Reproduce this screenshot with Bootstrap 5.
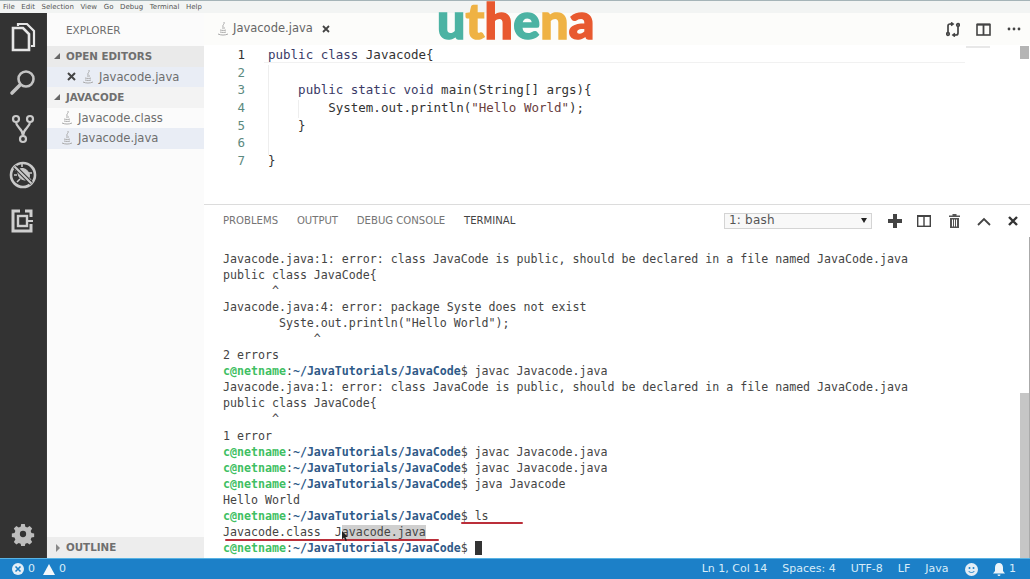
<!DOCTYPE html>
<html lang="en"><head><meta charset="utf-8"><title>Javacode.java</title>
<link href="https://cdn.jsdelivr.net/npm/bootstrap@5.3.0/dist/css/bootstrap.min.css" rel="stylesheet">
<script src="https://cdn.jsdelivr.net/npm/bootstrap@5.3.0/dist/js/bootstrap.bundle.min.js"></script>
<style>
html,body{height:579px;overflow:hidden}
body{font-family:"DejaVu Sans",sans-serif;color:#444;background:#fff;width:1030px}
.app{height:579px}
.menubar{height:13px;background:#f2f4f3;font-size:7px;line-height:12px;color:#555;gap:6.65px;padding-left:3px;border-top:1px solid #a5b4b8;flex:none}
.actbar{width:47px;background:#333;flex:none;padding-top:9px;border-right:1px solid #3a3a3a}
.actbtn{height:46px;color:#ddd}
.actbar svg{display:block}
.side{width:157px;background:#fbfbfb;flex:none}
.sidehead{height:33px;padding-left:19px;line-height:34px;font-size:10.4px;color:#6f6f6f}
.sect{height:20.5px;line-height:21px;background:#eaeaea;font-weight:700;font-size:10.3px;color:#6f6f6f;padding-left:19px;position:relative;flex:none}
.sect.plain{background:#f3f3f3}
.sect:before{content:"";position:absolute;left:7px;top:7px;border:3px solid transparent;border-right-color:#666;border-bottom-color:#666}
.sect.shut:before{left:9px;top:7px;border:4px solid transparent;border-left:4px solid #888;border-right:0}
.fileitem{height:20.5px;line-height:20.5px;color:#6e6e6e;font-size:11.6px;white-space:nowrap;flex:none}
.fileitem.sel{background:#e9edf5}
.main{min-width:0;background:#fff}
.tabs{height:32px;background:#fcfcfa;flex:none;font-size:11.5px;color:#666;padding-left:13px}
.editor{height:159px;flex:none;font-family:"DejaVu Sans Mono",monospace;font-size:12.5px;line-height:17.67px;color:#333;padding-top:1px}
.gutter{width:41px;text-align:right;color:#5c8a80;flex:none}
.gutter b{font-weight:400;color:#333;display:block}
.gutter i{font-style:normal;display:block}
.codearea{margin-left:23px}
.codeln{height:17.67px;white-space:pre}
.kw{color:#3a3a66}.str{color:#6a4040}
.panelhead{height:33px;border-top:1px solid #dcdcdc;flex:none;font-size:10.1px;color:#757575;padding:0 2px 0 19px}
.ptab{margin-right:18.800px;line-height:32px;white-space:nowrap}
.ptab.on{color:#444}
.bashsel{width:148px;height:16px;border:1px solid #d4d4d4;background:#f8f8f8;font-size:12px;line-height:13px;padding-left:4px;color:#555;margin-left:auto;position:relative;letter-spacing:.2px}
.bashsel:after{content:"";position:absolute;right:4px;top:4px;border:3.500px solid transparent;border-top:5px solid #222;border-bottom:0}
.picons{margin-left:8px}
.picons span{width:29.600px;display:flex;justify-content:center;align-items:center}
.term{flex:1;font-family:"DejaVu Sans Mono",monospace;font-size:11.62px;line-height:16.06px;color:#444;padding:14px 0 0 19px;position:relative;overflow:hidden;border-right:1px solid #aaa}
.tl{height:16.06px;white-space:pre}
.pg{color:#3fbf63;font-weight:700}.pb{color:#2f5a88;font-weight:700}
.hl{background:#cfcfcf}
.cur{display:inline-block;width:7px;height:14px;background:#333;vertical-align:-3px}
.rline{position:absolute;height:2px;background:#bb2f3a;border-radius:1px}
.tscroll{position:absolute;right:0;top:156px;width:9px;bottom:0;background:#c6c6c6}
.status{height:21px;background:#1c80c8;color:#d8ecf8;flex:none;font-size:11px;border-top:1px solid #58b3e4;padding:0 14px 0 12px}
.status .rgt{gap:15px}
.smile{margin-left:1.500px}
.mini{position:absolute;left:966px;top:46px;width:24px;height:2px;background:#e8e8e8}
.minis{position:absolute;right:1px;top:46px;width:9px;height:13px;background:#b4b4b4}
.guide{position:absolute;width:1px;background:#eee}
.brand{position:absolute;left:437px;top:0;font-family:Lato,sans-serif;font-weight:900;font-size:50px;line-height:40px;letter-spacing:.2px;-webkit-text-stroke:1.500px currentColor}
.b1{color:#4cb3a3}.b2{color:#efb244}.b3{color:#e8592f}
.curline{position:absolute;left:264px;right:65px;top:62px;height:1px;background:#f1f1f1}
.ptr{position:absolute;left:342px;top:531px}
</style></head><body>
<div class="app d-flex flex-column position-relative">
 <div class="menubar d-flex"><span>File</span><span>Edit</span><span>Selection</span><span>View</span><span>Go</span><span>Debug</span><span>Terminal</span><span>Help</span></div>
 <div class="d-flex flex-grow-1" style="min-height:0">
  <div class="actbar d-flex flex-column">
   <div class="actbtn d-flex justify-content-center"><svg width="26" height="30" viewBox="0 0 26 30" fill="none" stroke="#e6e6e6" stroke-width="2.200"><path d="M8 4V2h9l7 7v15h-3"/><path d="M3 6h10l6 6v16H3z" stroke-width="2.600"/></svg></div>
   <div class="actbtn d-flex justify-content-center"><svg width="30" height="30" viewBox="0 0 30 30" fill="none" stroke="#c4c4c4"><circle cx="18" cy="11" r="7.500" stroke-width="2.600"/><path d="M12 17L4 25" stroke-width="3.600" stroke-linecap="round"/></svg></div>
   <div class="actbtn d-flex justify-content-center"><svg width="24" height="30" viewBox="0 0 24 30" fill="none" stroke="#c9c9c9" stroke-width="2.200"><circle cx="5" cy="5" r="3"/><circle cx="19" cy="5" r="3"/><circle cx="12" cy="25" r="3"/><path d="M5 8c0 6 7 6 7 14M19 8c0 6-7 6-7 14"/></svg></div>
   <div class="actbtn d-flex justify-content-center"><svg width="28" height="30" viewBox="0 0 28 30" fill="none" stroke="#c9c9c9"><circle cx="14" cy="15" r="12" stroke-width="2.600"/><ellipse cx="15" cy="15" rx="5" ry="6.500" fill="#c9c9c9" transform="rotate(-45 14 15)"/><path d="M9 9l-3 1M13 7l0-3M20 13l3 0M19 18l3 2M11 19l-3 3M8 15l-3 0" stroke-width="1.600"/><path d="M5.500 6.500l17 17" stroke="#333" stroke-width="4"/><path d="M5.500 6.500l17 17" stroke-width="2.200"/></svg></div>
   <div class="actbtn d-flex justify-content-center"><svg width="24" height="30" viewBox="0 0 24 30" fill="none" stroke="#cfcfcf"><path d="M9 5H2v20h18v-7" stroke-width="3"/><path d="M14 5h6v6" stroke-width="3"/><rect x="7" y="10" width="9" height="10" stroke-width="2.400"/><path d="M16 15h6" stroke-width="2"/></svg></div>
   <div class="mt-auto d-flex justify-content-center" style="padding-bottom:12px"><svg width="24" height="24" viewBox="0 0 24 24" fill="#bdbdbd"><path fill-rule="evenodd" d="M10 1h4l.6 3 2.200.9 2.600-1.700 2.800 2.800-1.700 2.600.9 2.200 3 .6v4l-3 .6-.9 2.200 1.700 2.600-2.800 2.800-2.600-1.700-2.200.9-.6 3h-4l-.6-3-2.200-.9-2.600 1.700-2.800-2.800 1.700-2.600-.9-2.200-3-.6v-4l3-.6.9-2.200-1.700-2.600 2.800-2.800 2.600 1.700 2.200-.9zM12 8.500a3.500 3.500 0 1 0 0 7 3.500 3.500 0 0 0 0-7z" transform="translate(1.200 1.200) scale(.9)"/></svg></div>
  </div>
  <div class="side d-flex flex-column">
   <div class="sidehead">EXPLORER</div>
   <div class="sect">OPEN EDITORS</div>
   <div class="fileitem sel d-flex align-items-center" style="padding-left:20px"><svg width="9" height="9" viewBox="0 0 9 9" stroke="#444" stroke-width="2" style="margin-right:6px"><path d="M1 1l7 7M8 1l-7 7"/></svg><svg width="12" height="14" viewBox="0 0 12 14" fill="none" stroke="#aaa" style="margin-right:5px"><use href="#javaic"/></svg>Javacode.java</div>
   <div class="sect plain">JAVACODE</div>
   <div class="fileitem d-flex align-items-center" style="padding-left:14px"><svg width="12" height="14" viewBox="0 0 12 14" fill="none" stroke="#aaa" style="margin-right:5px"><use href="#javaic"/></svg>Javacode.class</div>
   <div class="fileitem sel d-flex align-items-center" style="padding-left:14px"><svg width="12" height="14" viewBox="0 0 12 14" fill="none" stroke="#aaa" style="margin-right:5px"><use href="#javaic"/></svg>Javacode.java</div>
   <div class="sect shut mt-auto" style="background:#ededed;height:21px;line-height:21px">OUTLINE</div>
  </div>
  <div class="main flex-grow-1 d-flex flex-column">
   <div class="tabs d-flex align-items-center"><svg width="12" height="14" viewBox="0 0 12 14" fill="none" stroke="#aaa" style="margin-right:4px"><use href="#javaic"/></svg>Javacode.java<svg width="8" height="8" viewBox="0 0 8 8" stroke="#444" stroke-width="1.800" style="margin-left:9px"><path d="M1 1l6 6M7 1L1 7"/></svg>
    <span class="ms-auto d-flex align-items-center" style="padding-right:9px;gap:16px"><svg width="14" height="15" viewBox="0 0 14 15" fill="none" stroke="#444" stroke-width="1.700"><path d="M7 2H4C2.500 2 2 3 2 4v6M5 0.500L7 2 5 3.500M7 13h3c1.500 0 2-1 2-2V5M9 11.500L7 13l2 1.500"/><circle cx="2" cy="12" r="1.300"/><circle cx="12" cy="3" r="1.300"/></svg><svg width="15" height="13" viewBox="0 0 15 13" fill="none" stroke="#444" stroke-width="1.600"><rect x="1" y="1.500" width="13" height="10.500"/><path d="M7.500 1.500V12M1 1.500h13" stroke-width="1.800"/></svg><svg width="14" height="4" viewBox="0 0 14 4" fill="#444"><circle cx="2" cy="2" r="1.400"/><circle cx="7" cy="2" r="1.400"/><circle cx="12" cy="2" r="1.400"/></svg></span></div>
   <div class="editor d-flex">
    <div class="gutter"><b>1</b><i>2</i><i>3</i><i>4</i><i>5</i><i>6</i><i>7</i></div>
    <div class="codearea flex-grow-1">
     <div class="codeln"><span class="kw">public class</span> Javacode{</div>
     <div class="codeln"> </div>
     <div class="codeln">    <span class="kw">public static void</span> main(String[] args){</div>
     <div class="codeln">        System.out.println(<span class="str">"Hello World"</span>);</div>
     <div class="codeln">    }</div>
     <div class="codeln"> </div>
     <div class="codeln">}</div>
    </div>
   </div>
   <div class="panelhead d-flex align-items-center">
    <span class="ptab">PROBLEMS</span><span class="ptab">OUTPUT</span><span class="ptab">DEBUG CONSOLE</span><span class="ptab on">TERMINAL</span>
    <div class="bashsel">1: bash</div>
    <div class="picons d-flex">
     <span><svg width="14" height="14" viewBox="0 0 14 14" fill="#444"><path d="M5 0h4v5h5v4H9v5H5V9H0V5h5z"/></svg></span>
     <span><svg width="14" height="12" viewBox="0 0 14 12" fill="none" stroke="#444" stroke-width="1.400"><rect x=".7" y=".7" width="12.600" height="10.600"/><path d="M7 .7v10.600M.7 1.200h12.600"/></svg></span>
     <span><svg width="11" height="14" viewBox="0 0 11 14" fill="#555"><path d="M3.500 0h4v1.500H11V3H0V1.500h3.500zM1 4h9v10H1zM3 5.500v7h1v-7zm2 0v7h1v-7zm2 0v7h1v-7z" fill-rule="evenodd"/></svg></span>
     <span><svg width="14" height="9" viewBox="0 0 14 9" fill="none" stroke="#444" stroke-width="1.800"><path d="M1 8l6-6 6 6"/></svg></span>
     <span><svg width="10" height="10" viewBox="0 0 10 10" stroke="#333" stroke-width="2.400"><path d="M1 1l8 8M9 1L1 9"/></svg></span>
    </div>
   </div>
   <div class="term">
    <div class="tl">Javacode.java:1: error: class JavaCode is public, should be declared in a file named JavaCode.java</div>
    <div class="tl">public class JavaCode{</div>
    <div class="tl">       ^</div>
    <div class="tl">Javacode.java:4: error: package Syste does not exist</div>
    <div class="tl">        Syste.out.println("Hello World");</div>
    <div class="tl">             ^</div>
    <div class="tl">2 errors</div>
    <div class="tl"><span class="pg">c@netname</span>:<span class="pb">~/JavaTutorials/JavaCode</span>$ javac Javacode.java</div>
    <div class="tl">Javacode.java:1: error: class JavaCode is public, should be declared in a file named JavaCode.java</div>
    <div class="tl">public class JavaCode{</div>
    <div class="tl">       ^</div>
    <div class="tl">1 error</div>
    <div class="tl"><span class="pg">c@netname</span>:<span class="pb">~/JavaTutorials/JavaCode</span>$ javac Javacode.java</div>
    <div class="tl"><span class="pg">c@netname</span>:<span class="pb">~/JavaTutorials/JavaCode</span>$ javac Javacode.java</div>
    <div class="tl"><span class="pg">c@netname</span>:<span class="pb">~/JavaTutorials/JavaCode</span>$ java Javacode</div>
    <div class="tl">Hello World</div>
    <div class="tl"><span class="pg">c@netname</span>:<span class="pb">~/JavaTutorials/JavaCode</span>$ ls</div>
    <div class="tl">Javacode.class  J<span class="hl">avacode.java</span></div>
    <div class="tl"><span class="pg">c@netname</span>:<span class="pb">~/JavaTutorials/JavaCode</span>$ <span class="cur"></span></div>
    <div class="tscroll"></div>
    <div class="rline" style="left:257px;top:285px;width:62px"></div>
    <div class="rline" style="left:21px;top:302px;width:214px"></div>
   </div>
  </div>
 </div>
 <div class="status d-flex align-items-center justify-content-between">
  <div class="d-flex align-items-center gap-1"><svg width="12" height="12" viewBox="0 0 12 12"><circle cx="6" cy="6" r="6" fill="#e4eef6"/><path d="M3.500 3.500l5 5M8.500 3.500l-5 5" stroke="#1c80c8" stroke-width="1.600"/></svg><span>0</span><svg width="12" height="11" viewBox="0 0 12 11" fill="#f4f8fb" class="ms-1"><path d="M6 0l6 11H0z"/></svg><span>0</span></div>
  <div class="rgt d-flex align-items-center"><span>Ln 1, Col 14</span><span>Spaces: 4</span><span>UTF-8</span><span>LF</span><span>Java</span><svg width="13" height="13" viewBox="0 0 13 13" class="smile"><circle cx="6.500" cy="6.500" r="6.500" fill="#e4eef6"/><circle cx="4.500" cy="5" r="1" fill="#1c80c8"/><circle cx="8.500" cy="5" r="1" fill="#1c80c8"/><path d="M3.500 8c1.500 2 4.500 2 6 0" stroke="#1c80c8" fill="none"/></svg><span class="d-flex align-items-center gap-1"><svg width="12" height="13" viewBox="0 0 12 13" fill="#eef5fa"><path d="M6 0c2.500 0 4 2 4 4.500V8l2 2.500H0L2 8V4.500C2 2 3.500 0 6 0zM4.500 11.500h3a1.500 1.500 0 0 1-3 0z"/></svg>1</span></div>
 </div>
 <div class="curline"></div>
 <div class="guide" style="left:268px;top:65px;height:90px"></div>
 <div class="guide" style="left:298px;top:100px;height:18px"></div>
 <div class="mini"></div><div class="minis"></div>
 <svg class="ptr" width="7" height="10" viewBox="0 0 7 10" fill="#222"><path d="M0 0l6 6H3.500L5 9.500 3.500 10 2 6.500 0 8.500z"/></svg>
 <div class="brand"><span class="b1">u</span><span class="b2">t</span><span class="b3">h</span><span class="b1">e</span><span class="b2">n</span><span class="b3">a</span></div>
</div>
<svg width="0" height="0" class="position-absolute"><defs><g id="javaic" stroke-width="1"><path d="M7 0C8 2 5 3 6 5M5 6h3M3 8c2 .6 5 .6 6 0M3 10c2 .6 5 .6 6 0M1 12c3 1.400 7 1.400 10 0"/></g></defs></svg>
</body></html>
